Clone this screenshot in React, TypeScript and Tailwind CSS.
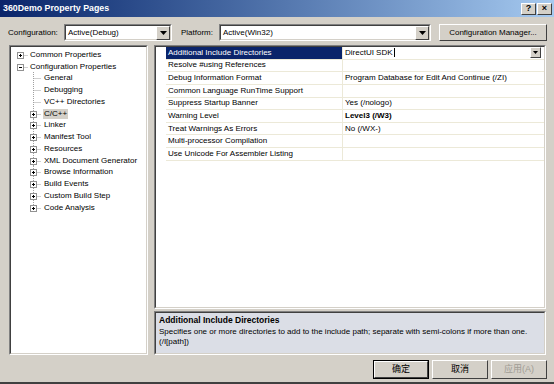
import React from "react";

const font = { fontFamily: '"Liberation Sans", Arial, sans-serif' };

const sunken =
  "border border-t-[#808080] border-l-[#808080] border-b-white border-r-white";

const DropArrow = () => (
  <div className="flex h-[14px] w-[14px] items-center justify-center border border-t-white border-l-white border-b-[#404040] border-r-[#404040] bg-[#d4d0c8]">
    <svg width="7" height="4" viewBox="0 0 7 4">
      <path d="M0 0h7L3.5 4z" fill="#000" />
    </svg>
  </div>
);

const Combo = ({ value, width }: { value: string; width: string }) => (
  <div className={`${sunken} ${width} h-[17px] shrink-0 bg-white`}>
    <div className="flex h-full items-center justify-between border border-t-[#404040] border-l-[#404040] border-b-[#d4d0c8] border-r-[#d4d0c8] pl-[2px]">
      <span className="leading-none text-black">{value}</span>
      <DropArrow />
    </div>
  </div>
);

// tree glyph: box (+/-), lines
const TreeGlyph = ({
  kind,
  vert,
  last,
}: {
  kind: "plus" | "minus" | "leaf";
  vert: boolean;
  last?: boolean;
}) => (
  <svg width="12" height="12" viewBox="0 0 12 12" className="shrink-0">
    {vert && (
      <line
        x1="3.5"
        y1="0"
        x2="3.5"
        y2={last ? 6 : 12}
        stroke="#a0a0a0"
        strokeDasharray="1 1"
      />
    )}
    <line x1="3.5" y1="6.5" x2="11" y2="6.5" stroke="#a0a0a0" strokeDasharray="1 1" />
    {kind !== "leaf" && (
      <>
        <rect x="0.5" y="3.5" width="6" height="6" fill="#fff" stroke="#919191" />
        <line x1="2" y1="6.5" x2="5" y2="6.5" stroke="#000" />
        {kind === "plus" && <line x1="3.5" y1="5" x2="3.5" y2="8" stroke="#000" />}
      </>
    )}
  </svg>
);

const children: { name: string; kind: "plus" | "leaf"; selected?: boolean }[] = [
  { name: "General", kind: "leaf" },
  { name: "Debugging", kind: "leaf" },
  { name: "VC++ Directories", kind: "leaf" },
  { name: "C/C++", kind: "plus", selected: true },
  { name: "Linker", kind: "plus" },
  { name: "Manifest Tool", kind: "plus" },
  { name: "Resources", kind: "plus" },
  { name: "XML Document Generator", kind: "plus" },
  { name: "Browse Information", kind: "plus" },
  { name: "Build Events", kind: "plus" },
  { name: "Custom Build Step", kind: "plus" },
  { name: "Code Analysis", kind: "plus" },
];

const rows: { name: string; value: string; bold?: boolean }[] = [
  { name: "Additional Include Directories", value: "DirectUI SDK" },
  { name: "Resolve #using References", value: "" },
  { name: "Debug Information Format", value: "Program Database for Edit And Continue (/ZI)" },
  { name: "Common Language RunTime Support", value: "" },
  { name: "Suppress Startup Banner", value: "Yes (/nologo)" },
  { name: "Warning Level", value: "Level3 (/W3)", bold: true },
  { name: "Treat Warnings As Errors", value: "No (/WX-)" },
  { name: "Multi-processor Compilation", value: "" },
  { name: "Use Unicode For Assembler Listing", value: "" },
];

const Button = ({
  children,
  disabled,
  isDefault,
}: {
  children: React.ReactNode;
  disabled?: boolean;
  isDefault?: boolean;
}) => (
  <div className={`h-[19px] w-[56px] ${isDefault ? "border border-black" : ""}`}>
    <div className="flex h-full w-full items-center justify-center border border-t-white border-l-white border-b-[#404040] border-r-[#404040] bg-[#d4d0c8]">
      <span
        className={`text-[9px] leading-none ${disabled ? "text-[#a09c94]" : "text-black"}`}
        style={{ fontFamily: '"Liberation Sans", "Noto Sans CJK SC", sans-serif' }}
      >
        {children}
      </span>
    </div>
  </div>
);

export default function App() {
  return (
    <div
      className="flex h-[384px] w-[554px] flex-col overflow-hidden whitespace-nowrap border-b-2 border-b-[#404040] bg-[#d4d0c8] text-[8px] text-black"
      style={font}
    >
      {/* title bar */}
      <div className="flex h-[17px] shrink-0 items-center justify-between bg-gradient-to-r from-[#0a246a] to-[#a6caf0] pl-[3px] pr-[2px]">
        <span className="text-[8.8px] font-bold text-white">360Demo Property Pages</span>
        <div className="flex gap-[1px]">
          {["?", "×"].map((c) => (
            <div
              key={c}
              className="flex h-[12px] w-[15px] items-center justify-center border border-t-white border-l-white border-b-[#404040] border-r-[#404040] bg-[#d4d0c8] text-[9px] font-bold leading-none"
            >
              {c}
            </div>
          ))}
        </div>
      </div>

      {/* configuration row */}
      <div className="mt-[7px] flex h-[17px] items-center pl-[8px]">
        <span className="w-[56px] shrink-0">Configuration:</span>
        <Combo value="Active(Debug)" width="w-[108px]" />
        <span className="ml-[9px] w-[38px] shrink-0">Platform:</span>
        <Combo value="Active(Win32)" width="w-[212px]" />
        <div className="ml-[8px] flex h-[17px] w-[108px] shrink-0 items-center justify-center border border-t-white border-l-white border-b-[#404040] border-r-[#404040]">
          Configuration Manager...
        </div>
      </div>

      {/* main */}
      <div className="mt-[4px] flex h-[310px] gap-[6px] pl-[9px]">
        {/* tree */}
        <div className={`${sunken} h-full w-[139px] shrink-0`}>
          <div className="h-full border border-t-[#404040] border-l-[#404040] border-b-[#d4d0c8] border-r-[#d4d0c8] bg-white pl-[6px] pt-[2px]">
            <div className="flex h-[11.75px] items-center">
              <TreeGlyph kind="plus" vert={false} />
              <span className="ml-[1px] leading-none">Common Properties</span>
            </div>
            <div className="flex h-[11.75px] items-center">
              <TreeGlyph kind="minus" vert={false} />
              <span className="ml-[1px] leading-none">Configuration Properties</span>
            </div>
            {children.map((c, i) => (
              <div key={c.name} className="flex h-[11.75px] items-center pl-[13px]">
                <TreeGlyph kind={c.kind} vert last={i === children.length - 1} />
                <span
                  className={`ml-[1px] px-[1px] leading-[10px] ${c.selected ? "bg-[#d4d0c8]" : ""}`}
                >
                  {c.name}
                </span>
              </div>
            ))}
          </div>
        </div>

        {/* right */}
        <div className="flex w-[392px] shrink-0 flex-col gap-[2px]">
          <div className={`${sunken} h-[264px]`}>
            <div className="h-full border border-t-[#404040] border-l-[#404040] border-b-[#d4d0c8] border-r-[#d4d0c8] bg-white">
              {rows.map((r, i) => (
                <div key={r.name} className="flex h-[12.625px]">
                  <div className="w-[10px] shrink-0 bg-white" />
                  <div
                    className={`flex w-[177px] shrink-0 items-center border-b border-r border-[#ece9d8] pl-[2px] ${i === 0 ? "bg-[#0a246a] text-white" : ""}`}
                  >
                    <span className="leading-none">{r.name}</span>
                  </div>
                  <div className="flex flex-1 items-center justify-between border-b border-[#ece9d8] pl-[2px] pr-[3px]">
                    <span className={`leading-none ${r.bold ? "font-bold" : ""}`}>
                      {r.value}
                      {i === 0 && <span className="ml-[1px] inline-block h-[9px] w-px bg-black align-middle" />}
                    </span>
                    {i === 0 && (
                      <div className="flex h-[11px] w-[11px] items-center justify-center border border-t-white border-l-white border-b-[#404040] border-r-[#404040] bg-[#d4d0c8]">
                        <svg width="5" height="3" viewBox="0 0 5 3">
                          <path d="M0 0h5L2.5 3z" fill="#000" />
                        </svg>
                      </div>
                    )}
                  </div>
                </div>
              ))}
            </div>
          </div>
          <div className={`${sunken} h-[44px]`}>
            <div className="h-full border border-t-[#404040] border-l-[#404040] border-b-[#d4d0c8] border-r-[#d4d0c8] bg-[#dbdee6] pl-[3px] pt-[2px] leading-[10px]">
              <div className="text-[8.5px] font-bold">Additional Include Directories</div>
              <div className="mt-[2px]">
                Specifies one or more directories to add to the include path; separate with semi-colons if more than one.
              </div>
              <div>(/I[path])</div>
            </div>
          </div>
        </div>
      </div>

      {/* buttons */}
      <div className="mt-[5px] flex justify-end gap-[3px] pr-[7px]">
        <Button isDefault>确定</Button>
        <Button>取消</Button>
        <Button disabled>应用(A)</Button>
      </div>
    </div>
  );
}
